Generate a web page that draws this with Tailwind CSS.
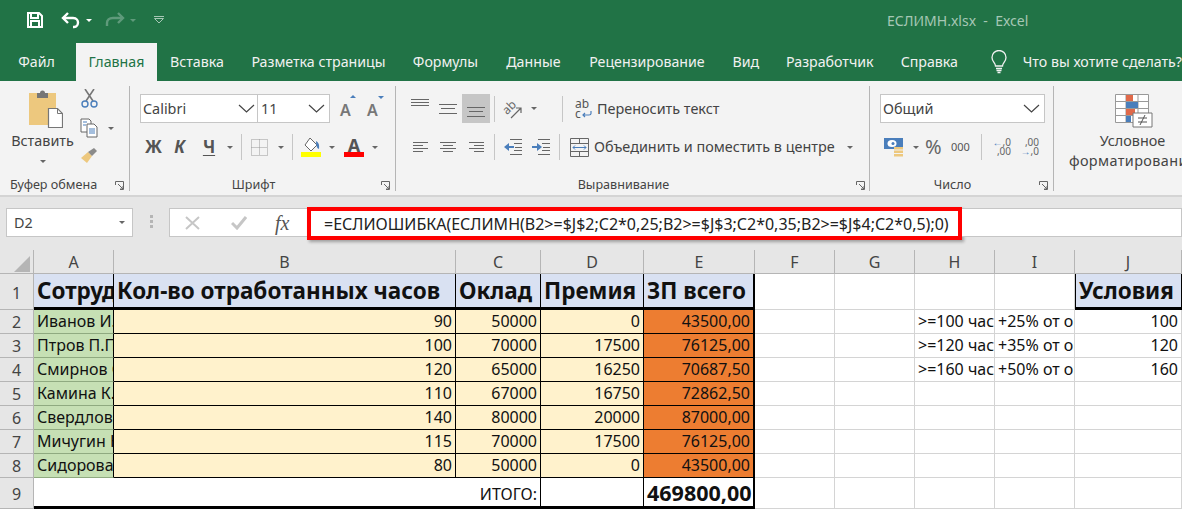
<!DOCTYPE html>
<html lang="ru">
<head>
<meta charset="UTF-8">
<title>ЕСЛИМН.xlsx - Excel</title>
<script src="https://cdn.jsdelivr.net/npm/@tailwindcss/browser@4"></script>
</head>
<body class="w-[1182px] h-[509px] overflow-hidden bg-white font-['Noto_Sans',sans-serif] text-[#444]">

<!-- quick access + title -->
<div class="h-[43px] bg-[#217346] flex items-center pl-[26px] pb-[3px]">
  <svg class="w-[18px] h-[18px]" viewBox="0 0 18 18" fill="none" stroke="#fff" stroke-width="2"><path d="M2 2h11l3 3v11H2z"/><path d="M5 2v5h7V2M5 16v-6h8v6"/></svg>
  <svg class="w-[20px] h-[18px] ml-[17px]" viewBox="0 0 20 18" fill="none" stroke="#fff" stroke-width="2.4"><path d="M7 2 2 7l5 5"/><path d="M2 7h10c4 0 5 3 5 4.500S16 16 13 16h-1"/></svg>
  <div class="w-0 h-0 ml-[5px] border-x-[3px] border-t-[3px] border-x-transparent border-t-white"></div>
  <svg class="w-[20px] h-[16px] ml-[13px]" viewBox="0 0 20 16" fill="none" stroke="#5f9a7b" stroke-width="2.4"><path d="m13 1 5 5-5 5"/><path d="M18 6H8C4 6 2 8 2 11v3"/></svg>
  <div class="w-0 h-0 ml-[5px] border-x-[3px] border-t-[3px] border-x-transparent border-t-[#5f9a7b]"></div>
  <svg class="w-[10px] h-[8px] ml-[18px]" viewBox="0 0 10 8" fill="none" stroke="#a6c7b5"><path d="M0 .5h10M.5 2.500 5 7l4.500-4.500z"/></svg>
  <div class="ml-[723px] text-[14px] text-[#a6c7b5] whitespace-pre">ЕСЛИМН.xlsx  -  Excel</div>
</div>

<!-- tabs -->
<div class="h-[38px] bg-[#217346] flex text-[14.2px] leading-[38px] text-[#f1f1f1] text-center whitespace-nowrap">
  <div class="w-[76px] pr-[3px]">Файл</div>
  <div class="w-[81px] bg-[#f3f3f3] text-[#217346]">Главная</div>
  <div class="w-[80px]">Вставка</div>
  <div class="w-[163px]">Разметка страницы</div>
  <div class="w-[91px]">Формулы</div>
  <div class="w-[85px]">Данные</div>
  <div class="w-[142px]">Рецензирование</div>
  <div class="w-[56px]">Вид</div>
  <div class="w-[112px]">Разработчик</div>
  <div class="w-[87px]">Справка</div>
  <div class="w-[50px] flex items-center pl-[17px]">
    <svg class="w-[18px] h-[24px]" viewBox="0 0 18 24" fill="none" stroke="#f1f1f1" stroke-width="1.300"><path d="M5.500 16c0-3-3.500-4.500-3.500-8.500a7 7 0 0 1 14 0c0 4-3.500 5.500-3.500 8.500z"/><path d="M6 18.500h6M6.500 20.500h5M7.500 22.500h3"/></svg>
  </div>
  <div class="text-left">Что вы хотите сделать?</div>
</div>

<!-- ribbon -->
<div class="h-[114px] bg-[#f3f3f3] flex text-[14.4px] text-[#444]">

  <!-- clipboard -->
  <div class="w-[130px] h-[105px] mt-[5px] border-r border-[#b5b5b5] flex flex-col shrink-0">
    <div class="flex h-[82px]">
      <div class="w-[75px] pl-[10px] flex flex-col items-center pt-[4px]">
        <svg class="w-[34px] h-[38px] ml-[7px]" viewBox="0 0 34 38"><path d="M0 3h27v32H0z" fill="#edc87e"/><path d="M8 3h3a2.500 2.500 0 0 1 5 0h3v5H8z" fill="#767676"/><path d="M19.500 18.500h9l5 5v14h-14z" fill="#fff" stroke="#767676" stroke-width="1.200"/><path d="M28.500 18.500v5h5" fill="none" stroke="#767676"/></svg>
        <div class="leading-[20px] mt-[3px]">Вставить</div>
        <div class="w-0 h-0 mt-[9px] border-x-[3px] border-t-[3px] border-x-transparent border-t-[#666]"></div>
      </div>
      <div class="flex flex-col pl-[5px] pt-[3px]">
        <svg class="w-[17px] h-[19px] ml-[1px]" viewBox="0 0 17 19" fill="none"><path d="M4 0l8 12M13 0 5 12" stroke="#767676" stroke-width="1.600"/><circle cx="4" cy="15" r="3" stroke="#4a7ebb" stroke-width="1.400"/><circle cx="13" cy="15" r="3" stroke="#4a7ebb" stroke-width="1.400"/></svg>
        <div class="flex items-center mt-[10px]">
          <svg class="w-[18px] h-[20px]" viewBox="0 0 18 20" fill="#fff" stroke="#666"><path d="M1 1h8l2 2v11H1z"/><path d="M7 6h7l3 3v10H7z"/><path d="M3 4h4M3 7h3M9 11h6M9 13h6M9 15h6" stroke="#4a7ebb"/></svg>
          <div class="w-0 h-0 ml-[10px] border-x-[3px] border-t-[3px] border-x-transparent border-t-[#666]"></div>
        </div>
        <svg class="w-[18px] h-[17px] mt-[9px]" viewBox="0 0 18 17"><path d="M1 11 8 5l4 4-5 7z" fill="#edc87e"/><path d="m8 5 6-4 3 3-5 5z" fill="#8a8a8a"/></svg>
      </div>
    </div>
    <div class="flex items-center pl-[10px] mt-[11px] h-[12px] whitespace-nowrap text-[12.600px]">Буфер обмена
      <svg class="w-[9px] h-[9px] ml-[18px]" viewBox="0 0 9 9" fill="none" stroke="#666"><path d="M.5 4V.5h8v8H5M3 3l5 5M5 8h3V5"/></svg>
    </div>
  </div>

  <!-- font -->
  <div class="w-[266px] h-[105px] mt-[5px] border-r border-[#b5b5b5] flex flex-col shrink-0 pl-[10px]">
    <div class="flex items-center mt-[8px] h-[29px]">
      <div class="w-[118px] h-[29px] bg-white border border-[#c6c6c6] flex items-center justify-between px-[2px] text-[14.4px]">Calibri
        <svg class="w-[17px] h-[9px]" viewBox="0 0 17 9" fill="none" stroke="#444" stroke-width="1.200"><path d="m1 1 7.500 7L16 1"/></svg>
      </div>
      <div class="w-[72px] h-[29px] bg-white border border-[#c6c6c6] border-l-0 flex items-center justify-between pl-[3px] pr-[4px] text-[14.4px]">11
        <svg class="w-[17px] h-[9px]" viewBox="0 0 17 9" fill="none" stroke="#444" stroke-width="1.200"><path d="m1 1 7.500 7L16 1"/></svg>
      </div>
      <div class="relative ml-[10px] w-[14px] text-[16px] font-semibold text-[#777] leading-[20px] pt-[2px]">A<span class="absolute right-[-2px] top-[-3px] w-0 h-0 border-x-[3px] border-b-[3px] border-x-transparent border-b-[#4a7ebb]"></span></div>
      <div class="relative ml-[13px] w-[14px] text-[16px] font-semibold text-[#777] leading-[20px] pt-[2px]">A<span class="absolute right-[-3px] top-[-2px] w-0 h-0 border-x-[3px] border-t-[3px] border-x-transparent border-t-[#4a7ebb]"></span></div>
    </div>
    <div class="flex items-center mt-[10px] h-[28px] font-bold text-[#555]">
      <div class="w-[25px] ml-[1px] text-center text-[17px]">Ж</div>
      <div class="w-[27px] text-center text-[17px] italic">К</div>
      <div class="w-[32px] text-center text-[17px] underline underline-offset-2">Ч</div>
      <div class="w-0 h-0 ml-[2px] border-x-[3px] border-t-[3px] border-x-transparent border-t-[#666]"></div>
      <div class="w-px h-[26px] bg-[#c6c6c6] ml-[8px]"></div>
      <svg class="w-[17px] h-[17px] ml-[9px]" viewBox="0 0 17 17" fill="none" stroke="#999" stroke-dasharray="1 1"><path d="M.5.500h16v16H.5zM8.500.500v16M.5 8.500h16"/></svg>
      <div class="w-0 h-0 ml-[10px] border-x-[3px] border-t-[3px] border-x-transparent border-t-[#666]"></div>
      <div class="w-px h-[26px] bg-[#c6c6c6] ml-[8px]"></div>
      <div class="ml-[8px] w-[20px] flex flex-col items-center">
        <svg class="w-[20px] h-[14px]" viewBox="0 0 20 14"><path d="m9 0 7 7-6 6-6-6z" fill="#fff" stroke="#666"/><path d="M15 3q4 2 3 8-3-1-3-8" fill="#4a7ebb"/></svg>
        <div class="w-[20px] h-[5px] bg-[#ffff00]"></div>
      </div>
      <div class="w-0 h-0 ml-[8px] border-x-[3px] border-t-[3px] border-x-transparent border-t-[#666]"></div>
      <div class="ml-[9px] w-[20px] flex flex-col items-center">
        <div class="text-[18px] leading-[15px] h-[14px]">A</div>
        <div class="w-[20px] h-[5px] bg-[#ff0000]"></div>
      </div>
      <div class="w-0 h-0 ml-[8px] border-x-[3px] border-t-[3px] border-x-transparent border-t-[#666]"></div>
    </div>
    <div class="flex items-center justify-end mt-[18px] h-[12px] pr-[5px] text-[12.600px]">
      <span class="mx-auto pr-[14px]">Шрифт</span>
      <svg class="w-[9px] h-[9px]" viewBox="0 0 9 9" fill="none" stroke="#666"><path d="M.5 4V.5h8v8H5M3 3l5 5M5 8h3V5"/></svg>
    </div>
  </div>

  <!-- alignment -->
  <div class="w-[474px] h-[105px] mt-[5px] border-r border-[#b5b5b5] flex flex-col shrink-0 pl-[15px]">
    <div class="flex items-center mt-[8px] h-[29px]">
      <svg class="w-[18px] h-[7px] mb-[12px]" viewBox="0 0 18 7" stroke="#666"><path d="M0 .5h18M0 3.500h18M0 6.500h18"/></svg>
      <svg class="w-[18px] h-[10px] ml-[10px]" viewBox="0 0 18 10" stroke="#666"><path d="M0 .5h18M2 4.500h14M0 9.500h18"/></svg>
      <div class="w-[28px] h-[29px] ml-[5px] bg-[#c6c6c6] flex items-end justify-center pb-[6px]">
        <svg class="w-[18px] h-[10px]" viewBox="0 0 18 10" stroke="#666"><path d="M0 .5h18M2 4.500h14M0 9.500h18"/></svg>
      </div>
      <div class="w-px h-[26px] bg-[#c6c6c6] ml-[4px]"></div>
      <svg class="w-[20px] h-[22px] ml-[8px]" viewBox="0 0 20 22" fill="none" stroke="#666" stroke-width="1.200"><text x="0" y="14" font-size="12" fill="#666" stroke="none" transform="rotate(-45 6 11)">ab</text><path d="m8 20 10-10M13 10h5v5"/></svg>
      <div class="w-0 h-0 ml-[8px] border-x-[3px] border-t-[3px] border-x-transparent border-t-[#666]"></div>
      <div class="w-px h-[26px] bg-[#c6c6c6] ml-[25px] mr-[12px]"></div>
      <svg class="w-[17px] h-[20px]" viewBox="0 0 17 20" fill="none"><text x="0" y="9" font-size="12" fill="#555">ab</text><text x="0" y="19" font-size="12" fill="#555">c</text><path d="M16 12v2.500q0 1.500-2 1.500H8M10 14l-2 2 2 2" stroke="#4a7ebb" stroke-width="1.200"/></svg>
      <div class="ml-[5px] whitespace-nowrap">Переносить текст</div>
    </div>
    <div class="flex items-center mt-[10px] h-[28px]">
      <svg class="w-[15px] h-[11px] ml-[2px]" viewBox="0 0 15 11" stroke="#666"><path d="M0 .5h15M0 3.500h10M0 6.500h15M0 9.500h10"/></svg>
      <svg class="w-[16px] h-[11px] ml-[12px]" viewBox="0 0 16 11" stroke="#666"><path d="M0 .5h16M3 3.500h10M0 6.500h16M3 9.500h10"/></svg>
      <svg class="w-[15px] h-[11px] ml-[13px]" viewBox="0 0 15 11" stroke="#666"><path d="M0 .5h15M5 3.500h10M0 6.500h15M5 9.500h10"/></svg>
      <div class="w-px h-[26px] bg-[#c6c6c6] ml-[10px]"></div>
      <svg class="w-[18px] h-[16px] ml-[9px]" viewBox="0 0 18 16"><path d="M0 8 5 4v3h5v2H5v3z" fill="#4a7ebb"/><path d="M6 .5h12M10 4.500h8M11 8.500h7M10 11.500h8M6 15.500h12" stroke="#666"/></svg>
      <svg class="w-[18px] h-[16px] ml-[10px]" viewBox="0 0 18 16"><path d="M10 8 5 4v3H0v2h5v3z" fill="#4a7ebb"/><path d="M6 .5h12M10 4.500h8M11 8.500h7M10 11.500h8M6 15.500h12" stroke="#666"/></svg>
      <div class="w-px h-[26px] bg-[#c6c6c6] ml-[9px] mr-[10px]"></div>
      <svg class="w-[19px] h-[19px]" viewBox="0 0 19 19" fill="none"><path d="M.5.500h18v18H.5zM.5 5.500h18M.5 13.500h18M9.500.500v5M9.500 13.500v5" stroke="#666"/><path d="M3 9.500h13M5 7.500l-2 2 2 2M14 7.500l2 2-2 2" stroke="#4a7ebb"/></svg>
      <div class="ml-[5px] whitespace-nowrap">Объединить и поместить в центре</div>
      <div class="w-0 h-0 ml-[12px] border-x-[3px] border-t-[3px] border-x-transparent border-t-[#666]"></div>
    </div>
    <div class="flex items-center justify-end mt-[18px] h-[12px] pr-[4px] text-[12.600px]">
      <span class="mx-auto pr-[20px]">Выравнивание</span>
      <svg class="w-[9px] h-[9px]" viewBox="0 0 9 9" fill="none" stroke="#666"><path d="M.5 4V.5h8v8H5M3 3l5 5M5 8h3V5"/></svg>
    </div>
  </div>

  <!-- number -->
  <div class="w-[184px] h-[105px] mt-[5px] border-r border-[#b5b5b5] flex flex-col shrink-0 pl-[10px]">
    <div class="mt-[8px] w-[165px] h-[29px] shrink-0 bg-white border border-[#c6c6c6] flex items-center justify-between pl-[2px] pr-[4px] text-[14.4px]">Общий
      <svg class="w-[17px] h-[9px]" viewBox="0 0 17 9" fill="none" stroke="#444" stroke-width="1.200"><path d="m1 1 7.500 7L16 1"/></svg>
    </div>
    <div class="flex items-center mt-[10px] h-[28px]">
      <svg class="w-[20px] h-[20px] ml-[4px]" viewBox="0 0 20 20"><path d="M0 1h19v11H0z" fill="#4a7ebb"/><ellipse cx="8" cy="6.500" rx="4.500" ry="3.500" fill="#fff"/><circle cx="9" cy="6.500" r="1.500" fill="#4a7ebb"/><path d="M10 10h9v2.500h-9zM10 13.500h9V16h-9zM10 17h9v2.500h-9z" fill="#edc87e"/></svg>
      <div class="w-0 h-0 ml-[9px] border-x-[3px] border-t-[3px] border-x-transparent border-t-[#666]"></div>
      <div class="ml-[6px] text-[20px] leading-[20px] text-[#666] w-[20px]">%</div>
      <div class="ml-[6px] text-[11px] w-[24px] text-[#555]">000</div>
      <div class="w-px h-[26px] bg-[#c6c6c6] ml-[6px]"></div>
      <div class="ml-[9px] w-[20px] text-[10px] leading-[9px] text-[#666] text-right"><span class="text-[#4a7ebb] font-bold">←</span>,0<br>,00</div>
      <div class="ml-[8px] w-[20px] text-[10px] leading-[9px] text-[#666] text-right">,00<br><span class="text-[#4a7ebb] font-bold">→</span>,0</div>
    </div>
    <div class="flex items-center justify-end mt-[18px] h-[12px] pr-[5px] text-[12.600px]">
      <span class="mx-auto pr-[14px]">Число</span>
      <svg class="w-[9px] h-[9px]" viewBox="0 0 9 9" fill="none" stroke="#666"><path d="M.5 4V.5h8v8H5M3 3l5 5M5 8h3V5"/></svg>
    </div>
  </div>

  <!-- conditional formatting -->
  <div class="flex-1 mt-[5px] pl-[12px] whitespace-nowrap overflow-hidden">
    <div class="w-[133px] flex flex-col items-center pt-[8px] leading-[20px]">
      <svg class="w-[38px] h-[34px] ml-[2px]" viewBox="0 0 38 34"><path d="M.5.500h33v28H.5zM.5 7.500h33M.5 14.500h33M.5 21.500h33M11 .5v28M23 .5v28" fill="#fff" stroke="#999"/><path d="M11 1h7v6h-7z" fill="#e0694a"/><path d="M11 8h12v6H11z" fill="#4a7ebb"/><path d="M11 15h9v6h-9z" fill="#e0694a"/><path d="M11 22h5v6h-5z" fill="#4a7ebb"/><path d="M18 19h19v14H18z" fill="#fff" stroke="#777"/><path d="M23 24h9M23 28h9M30 21l-5 10" stroke="#555" fill="none"/></svg>
      <div class="mt-[3px]">Условное</div>
      <div class="tracking-[0.4px]">форматирование</div>
    </div>
  </div>
</div>

<!-- formula bar -->
<div class="h-[55px] bg-[#e6e6e6] border-t-2 border-[#d4d4d4] flex items-start pt-[11px] pl-[6px]">
  <div class="w-[127px] h-[29px] bg-white border border-[#c6c6c6] flex items-center justify-between px-[7px] text-[14.4px]">D2
    <div class="w-0 h-0 border-x-[3px] border-t-[3px] border-x-transparent border-t-[#666]"></div>
  </div>
  <div class="flex flex-col gap-[2px] ml-[17px] mt-[7px]">
    <div class="w-[3px] h-[3px] bg-[#b5b5b5]"></div>
    <div class="w-[3px] h-[3px] bg-[#b5b5b5]"></div>
    <div class="w-[3px] h-[3px] bg-[#b5b5b5]"></div>
  </div>
  <div class="w-[138px] h-[29px] bg-white border border-[#c6c6c6] border-r-0 ml-[16px] flex items-center pl-[15px]">
    <svg class="w-[15px] h-[14px]" viewBox="0 0 15 14" fill="none" stroke="#c6c6c6" stroke-width="2"><path d="m1 1 13 12M14 1 1 13"/></svg>
    <svg class="w-[16px] h-[14px] ml-[31px]" viewBox="0 0 16 14" fill="none" stroke="#c6c6c6" stroke-width="3"><path d="m1 7 5 5 9-11"/></svg>
    <div class="ml-[28px] font-['Liberation_Serif',serif] italic text-[20px] text-[#555]">fx</div>
  </div>
  <div class="w-[655px] h-[33px] mt-[-1px] bg-white border-4 border-[#ff0000] flex items-center pl-[13px] text-[16px] text-[#222] whitespace-nowrap shadow-[2px_2px_3px_#00000050]">=ЕСЛИОШИБКА(ЕСЛИМН(B2&gt;=$J$2;C2*0,25;B2&gt;=$J$3;C2*0,35;B2&gt;=$J$4;C2*0,5);0)</div>
  <div class="flex-1 h-[29px] bg-white border border-[#c6c6c6] border-l-0"></div>
</div>

<!-- sheet -->
<div id="sheet" class="grid grid-cols-[34px_80px_342px_85px_103px_111px_80px_80px_80px_80px_107px] grid-rows-[24px_36px_repeat(7,24px)_31px] text-[16px] text-[#111] leading-[23px]"></div>

<script>
  const head = "bg-[#e6e6e6] border-r border-b border-[#b5b5b5] text-center text-[#444] leading-[24px]";
  const gridCell = "overflow-hidden whitespace-nowrap px-[3px] border-r border-b border-[#d4d4d4]";
  const cols = ["A", "B", "C", "D", "E", "F", "G", "H", "I", "J"];
  const titleCell = "overflow-hidden whitespace-nowrap pl-[3px] bg-[#d9e1f2] border-r border-b-[3px] border-black text-[22.5px] leading-[34px] font-bold";
  const names = ["Иванов И.И.", "Птров П.П.", "Смирнов С.С.", "Камина К.К.", "Свердлов С.С.", "Мичугин Н.Н.", "Сидорова С.С."];
  const rows = [
    [90, 50000, 0, "43500,00"], [100, 70000, 17500, "76125,00"], [120, 65000, 16250, "70687,50"],
    [110, 67000, 16750, "72862,50"], [140, 80000, 20000, "87000,00"], [115, 70000, 17500, "76125,00"], [80, 50000, 0, "43500,00"]
  ];
  const side = [[">=100 часов", "+25% от оклада", 100], [">=120 часов", "+35% от оклада", 120], [">=160 часов", "+50% от оклада", 160]];
  const cell = (cls, txt = "") => `<div class="${cls}">${txt}</div>`;
  let html = "";

  html += `<div class="bg-[#e6e6e6] border-r border-b border-[#b5b5b5] flex items-end justify-end pr-[3px] pb-[1px]"><div class="w-0 h-0 border-l-[16px] border-b-[16px] border-l-transparent border-b-[#b5b5b5]"></div></div>`;
  cols.forEach(c => html += cell(head, c));

  html += cell("bg-[#e6e6e6] border-r border-b border-[#b5b5b5] text-center text-[#444] leading-[38px]", 1);
  html += cell(titleCell, "Сотрудник");
  html += cell(titleCell, "Кол-во отработанных часов");
  html += cell(titleCell, "Оклад");
  html += cell(titleCell, "Премия");
  html += cell(titleCell + " border-r-2", "ЗП всего");
  html += cell(gridCell) + cell(gridCell) + cell(gridCell) + cell(gridCell);
  html += cell(titleCell + " border-l", "Условия");

  rows.forEach((r, i) => {
    html += cell(head, i + 2);
    html += cell("overflow-hidden whitespace-nowrap pl-[3px] bg-[#c6e0b4] border-r border-r-black border-b border-b-[#8faa80]", names[i]);
    html += cell("px-[3px] bg-[#fff2cc] text-right border-r border-b border-black", r[0]);
    html += cell("px-[3px] bg-[#fff2cc] text-right border-r border-b border-black", r[1]);
    html += cell("px-[3px] bg-[#fff2cc] text-right border-r border-b border-black", r[2]);
    html += cell("px-[3px] bg-[#ed7d31] text-right border-r-2 border-b border-black", r[3]);
    html += cell(gridCell) + cell(gridCell);
    html += cell(gridCell, side[i] ? side[i][0] : "");
    html += cell(gridCell, side[i] ? side[i][1] : "");
    html += cell(gridCell + " text-right", side[i] ? side[i][2] : "");
  });

  html += cell("bg-[#e6e6e6] border-r border-b border-[#b5b5b5] text-center text-[#444] leading-[33px]", 9);
  html += cell("col-span-3 px-[3px] text-right border-r border-b-[3px] border-black leading-[32px]", "ИТОГО:");
  html += cell("border-r border-b-[3px] border-black");
  html += cell("px-[3px] text-right border-r-2 border-b-[3px] border-black text-[21.5px] leading-[29px] font-bold", "469800,00");
  html += cell(gridCell) + cell(gridCell) + cell(gridCell) + cell(gridCell) + cell(gridCell);

  document.getElementById("sheet").innerHTML = html;
</script>
</body>
</html>
